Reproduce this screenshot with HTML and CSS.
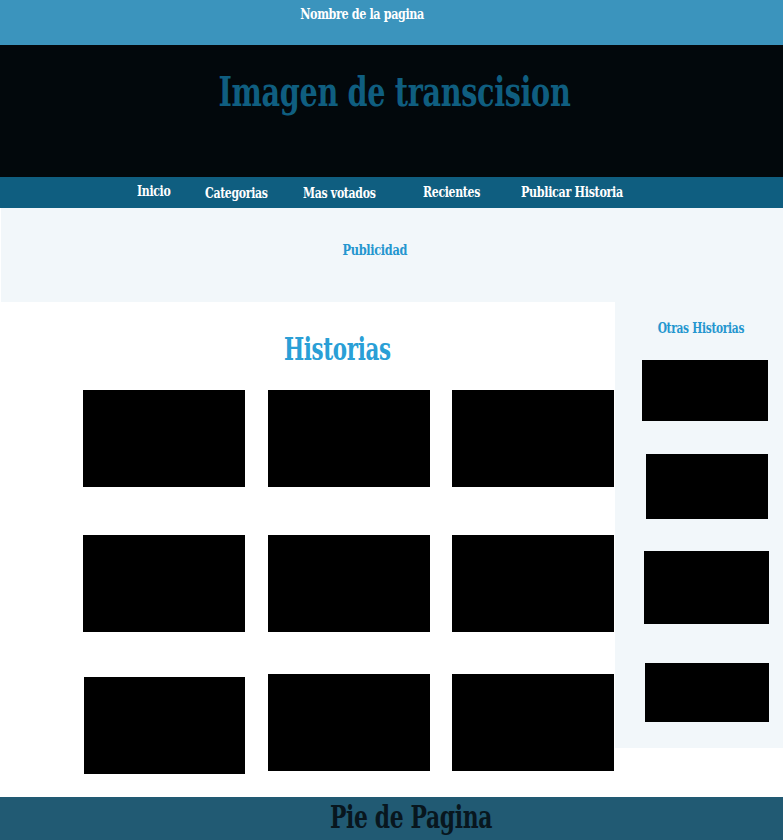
FILE: index.html
```html
<!DOCTYPE html>
<html lang="es">
<head>
<meta charset="utf-8">
<title>Historias</title>
<link rel="stylesheet" href="styles.css">
</head>
<body>
<header class="topbar"><span class="site-name">Nombre de la pagina</span></header>
<section class="hero"><h1 class="hero-title">Imagen de transcision</h1></section>
<nav class="nav">
  <a class="nav-item n1">Inicio</a>
  <a class="nav-item n2">Categorias</a>
  <a class="nav-item n3">Mas votados</a>
  <a class="nav-item n4">Recientes</a>
  <a class="nav-item n5">Publicar Historia</a>
</nav>
<section class="ad"><span class="ad-text">Publicidad</span></section>
<div class="main">
  <section class="content">
    <div class="title-wrap"><h2 class="content-title">Historias</h2></div>
    <div class="grid">
      <div class="card"></div><div class="card"></div><div class="card"></div>
      <div class="card"></div><div class="card"></div><div class="card"></div>
      <div class="card last shifted"></div><div class="card last"></div><div class="card last"></div>
    </div>
  </section>
  <aside class="sidebar">
    <div class="side-title-wrap"><h3 class="side-title">Otras Historias</h3></div>
    <div class="side-box s1"></div>
    <div class="side-box s2"></div>
    <div class="side-box s3"></div>
    <div class="side-box s4"></div>
  </aside>
</div>
<footer class="footer"><span class="footer-text">Pie de Pagina</span></footer>
</body>
</html>
```
FILE: styles.css
```css
* { box-sizing: border-box; }
body {
  margin: 0;
  font-family: "DejaVu Serif", "Liberation Serif", serif;
  font-weight: bold;
  background: #ffffff;
}
.topbar {
  height: 45px;
  background: #3b94bd;
  display: flex;
  justify-content: center;
}
.site-name {
  display: inline-block;
  color: #ffffff;
  font-size: 15px;
  line-height: 28px;
  margin-left: -59px;
  letter-spacing: -0.5px;
  transform: scaleX(0.744);
}
.hero {
  height: 132px;
  background: #02080c;
  display: flex;
  justify-content: center;
}
.hero-title {
  margin: 21px 0 0 5px;
  color: #0f5e80;
  font-size: 41px;
  line-height: 52px;
  letter-spacing: -0.5px;
  transform: scaleX(0.70);
}
.nav {
  height: 31px;
  background: #0f5e80;
  display: flex;
  align-items: flex-start;
}
.nav-item {
  display: inline-block;
  color: #ffffff;
  font-size: 14px;
  line-height: 30px;
  letter-spacing: -0.4px;
  transform: scaleX(0.78);
  transform-origin: left center;
}
.n1 { margin-left: 137px; margin-top: -1px; }
.n2 { margin-left: 25px; margin-top: 1px; }
.n3 { margin-left: 17.5px; margin-top: 1px; }
.n4 { margin-left: 27.5px; margin-top: 0; }
.n5 { margin-left: 24.5px; margin-top: 0; transform: scaleX(0.795); }
.ad {
  height: 94px;
  margin-left: 1px;
  background: #f2f7fa;
  display: flex;
  justify-content: center;
  padding-top: 31px;
}
.ad-text {
  display: inline-block;
  color: #2596cf;
  font-size: 14px;
  line-height: 22px;
  margin-left: -35px;
  letter-spacing: -0.4px;
  transform: scaleX(0.81);
  align-self: flex-start;
}
.main {
  display: flex;
  align-items: flex-start;
}
.content {
  width: 615px;
  padding-bottom: 20px;
}
.title-wrap {
  display: flex;
  justify-content: center;
  padding-top: 27px;
  padding-left: 60px;
}
.content-title {
  margin: 0;
  color: #2a9fd6;
  font-size: 31px;
  line-height: 40px;
  letter-spacing: -0.5px;
  transform: scaleX(0.69);
}
.grid {
  margin-top: 21px;
  padding-left: 83px;
  display: grid;
  grid-template-columns: repeat(3, 162px);
  column-gap: 22.5px;
  row-gap: 48px;
  grid-auto-rows: 97px;
  align-items: start;
}
.card { background: #000000; height: 97px; }
.grid .card.last { margin-top: -6px; }
.grid .card.shifted { margin-top: -3px; margin-left: 1px; }
.sidebar {
  width: 168px;
  height: 446px;
  background: #f2f7fa;
  display: flex;
  flex-direction: column;
}
.side-title-wrap {
  display: flex;
  justify-content: center;
  padding-top: 15px;
  padding-left: 4px;
}
.side-title {
  margin: 0;
  color: #2596cf;
  font-size: 14px;
  line-height: 22px;
  letter-spacing: -0.4px;
  transform: scaleX(0.76);
}
.side-box { background: #000000; }
.s1 { width: 126px; height: 61px; margin: 21px 0 0 27px; }
.s2 { width: 122px; height: 65px; margin: 33px 0 0 31px; }
.s3 { width: 125px; height: 73px; margin: 32px 0 0 29px; }
.s4 { width: 124px; height: 59px; margin: 39px 0 0 30px; }
.footer {
  height: 43px;
  background: #215a73;
  display: flex;
  justify-content: center;
}
.footer-text {
  display: inline-block;
  color: #08161e;
  font-size: 31px;
  line-height: 40px;
  margin-left: 39px;
  letter-spacing: -0.5px;
  transform: scaleX(0.705);
}
```
